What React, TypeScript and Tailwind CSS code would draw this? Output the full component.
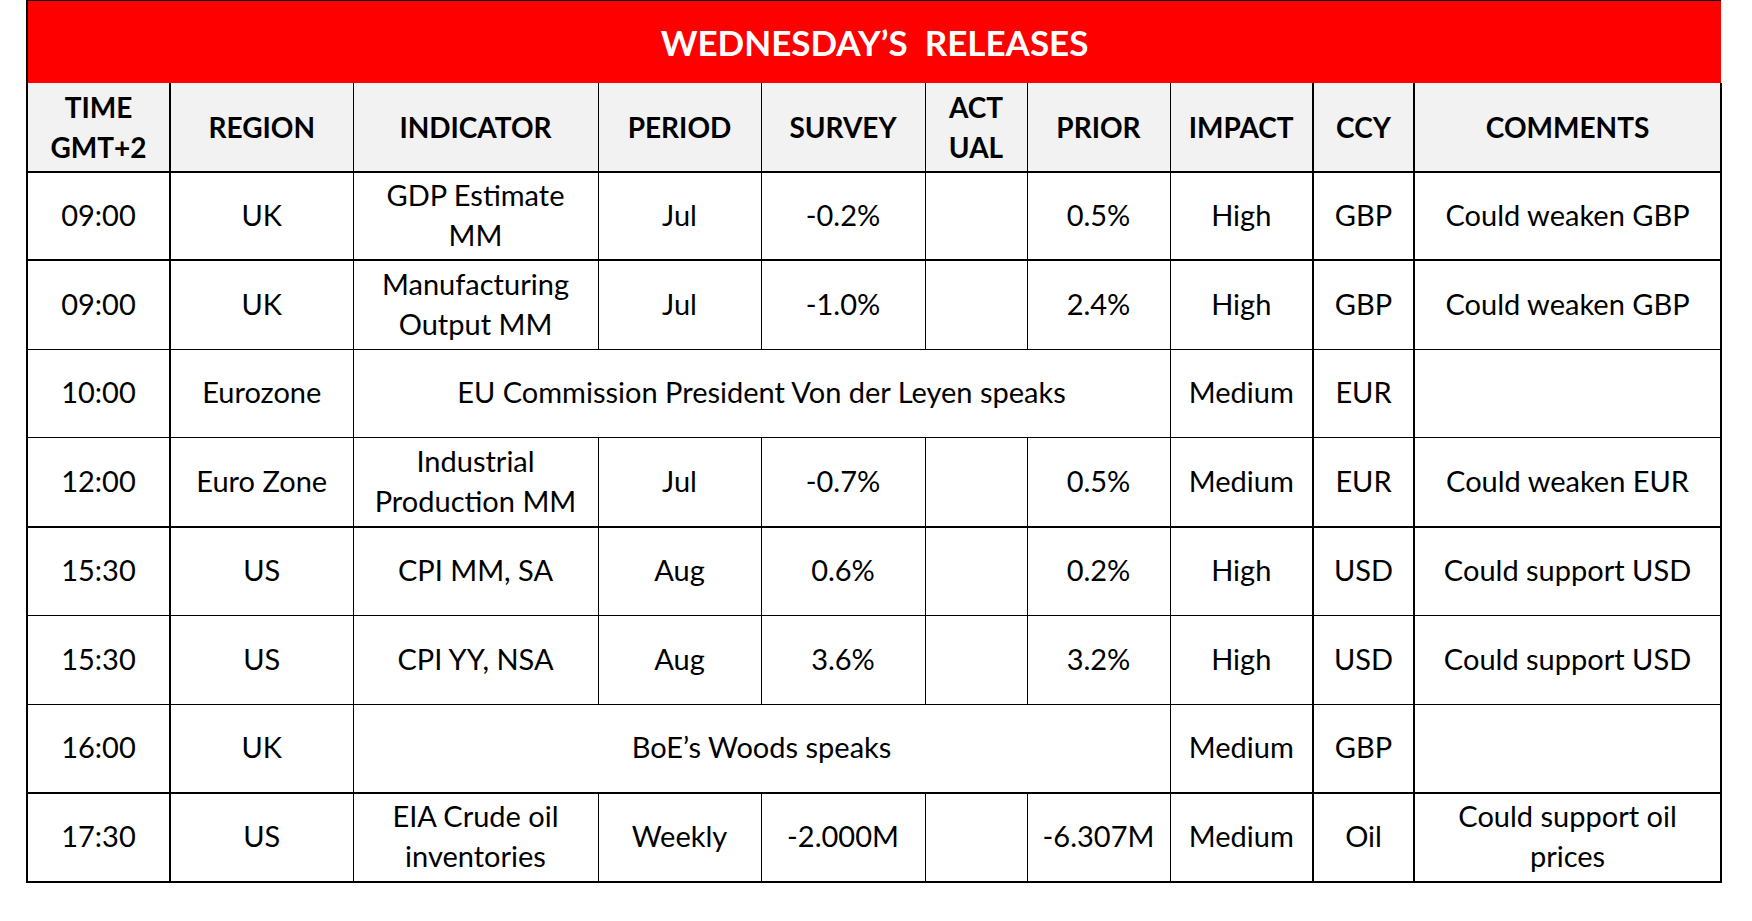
import React from "react";

type Row = {
  time: string;
  region: string;
  indicator: React.ReactNode;
  period?: string;
  survey?: string;
  prior?: string;
  impact: string;
  ccy: string;
  comment?: React.ReactNode;
  span?: boolean;
  thick?: boolean;
};

const rows: Row[] = [
  { time: "09:00", region: "UK", indicator: <>GDP Estimate<br />MM</>, period: "Jul", survey: "-0.2%", prior: "0.5%", impact: "High", ccy: "GBP", comment: "Could weaken GBP", thick: true },
  { time: "09:00", region: "UK", indicator: <>Manufacturing<br />Output MM</>, period: "Jul", survey: "-1.0%", prior: "2.4%", impact: "High", ccy: "GBP", comment: "Could weaken GBP" },
  { time: "10:00", region: "Eurozone", indicator: "EU Commission President Von der Leyen speaks", impact: "Medium", ccy: "EUR", span: true },
  { time: "12:00", region: "Euro Zone", indicator: <>Industrial<br />Production MM</>, period: "Jul", survey: "-0.7%", prior: "0.5%", impact: "Medium", ccy: "EUR", comment: "Could weaken EUR", thick: true },
  { time: "15:30", region: "US", indicator: "CPI MM, SA", period: "Aug", survey: "0.6%", prior: "0.2%", impact: "High", ccy: "USD", comment: "Could support USD" },
  { time: "15:30", region: "US", indicator: "CPI YY, NSA", period: "Aug", survey: "3.6%", prior: "3.2%", impact: "High", ccy: "USD", comment: "Could support USD" },
  { time: "16:00", region: "UK", indicator: "BoE’s Woods speaks", impact: "Medium", ccy: "GBP", span: true, thick: true },
  { time: "17:30", region: "US", indicator: <>EIA Crude oil<br />inventories</>, period: "Weekly", survey: "-2.000M", prior: "-6.307M", impact: "Medium", ccy: "Oil", comment: <>Could support oil<br />prices</>, thick: true },
];

const widths = [143, 183, 245, 163, 164, 102, 143, 143, 101, 307];

const th = "bg-[#f2f2f2] font-bold text-[28px] leading-[40px] text-black text-center align-middle p-0";
const td = "text-[29px] leading-[40px] text-black text-center align-middle p-0 pb-[2px]";

export default function App() {
  return (
    <div className="min-h-screen bg-white font-['Lato','Liberation_Sans',sans-serif]">
      <table className="ml-[26px] w-[1694px] table-fixed border-collapse">
        <colgroup>
          {widths.map((w, i) => (
            <col key={i} style={{ width: w }} />
          ))}
        </colgroup>
        <thead>
          <tr className="h-[82px]">
            <th colSpan={10} className="bg-[#ff0000] border-t border-l-2 border-black p-0 text-white text-[35px] font-bold whitespace-pre">
              {"WEDNESDAY’S  RELEASES"}
            </th>
          </tr>
          <tr className="h-[89px] border-b-2 border-black">
            <th className={`${th} border-l-2 border-r-2 border-black`}>TIME<br />GMT+2</th>
            <th className={`${th} border-r border-black`}>REGION</th>
            <th className={`${th} border-r border-black`}>INDICATOR</th>
            <th className={`${th} border-r border-black`}>PERIOD</th>
            <th className={`${th} border-r border-black`}>SURVEY</th>
            <th className={`${th} border-r border-black`}>ACT<br />UAL</th>
            <th className={`${th} border-r border-black`}>PRIOR</th>
            <th className={`${th} border-r-2 border-black`}>IMPACT</th>
            <th className={`${th} border-r-2 border-black`}>CCY</th>
            <th className={`${th} border-r-2 border-black`}>COMMENTS</th>
          </tr>
        </thead>
        <tbody>
          {rows.map((r, i) => (
            <tr key={i} className={`h-[88.75px] border-black ${r.thick ? "border-b-2" : "border-b"}`}>
              <td className={`${td} border-l-2 border-r-2 border-black`}>{r.time}</td>
              <td className={`${td} border-r border-black`}>{r.region}</td>
              {r.span ? (
                <td colSpan={5} className={`${td} border-r border-black`}>{r.indicator}</td>
              ) : (
                <>
                  <td className={`${td} border-r border-black`}>{r.indicator}</td>
                  <td className={`${td} border-r border-black`}>{r.period}</td>
                  <td className={`${td} border-r border-black`}>{r.survey}</td>
                  <td className={`${td} border-r border-black`}></td>
                  <td className={`${td} border-r border-black`}>{r.prior}</td>
                </>
              )}
              <td className={`${td} border-r-2 border-black`}>{r.impact}</td>
              <td className={`${td} border-r-2 border-black`}>{r.ccy}</td>
              <td className={`${td} border-r-2 border-black`}>{r.comment}</td>
            </tr>
          ))}
        </tbody>
      </table>
    </div>
  );
}
